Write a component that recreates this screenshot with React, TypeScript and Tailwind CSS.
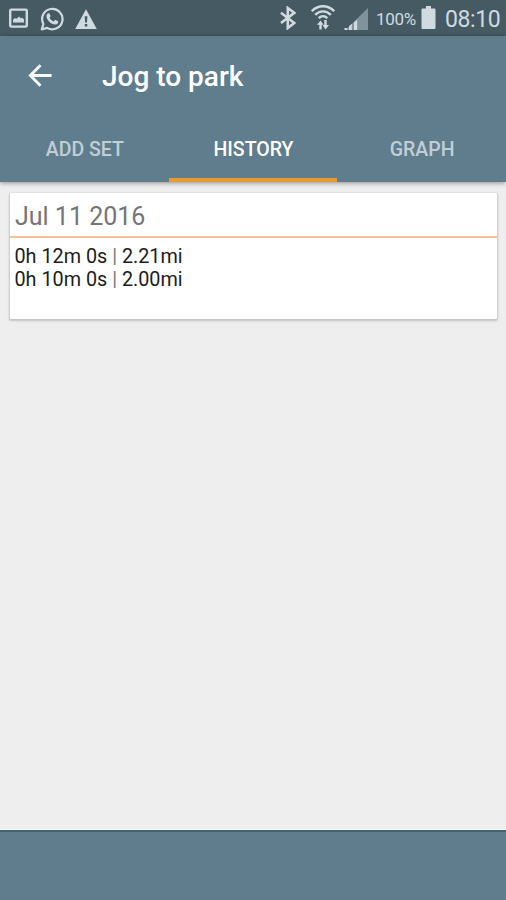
import React, { useState } from 'react';

interface SetEntry {
  id: number;
  duration: string;
  distance: string;
}

interface HistoryCardProps {
  date: string;
  sets: SetEntry[];
}

const TABS = ['ADD SET', 'HISTORY', 'GRAPH'];

const SETS: SetEntry[] = [
  { id: 1, duration: '0h 12m 0s', distance: '2.21mi' },
  { id: 2, duration: '0h 10m 0s', distance: '2.00mi' },
];

const StatusBar: React.FC = () => (
  <div className="flex h-9 shrink-0 items-start bg-[#465a64] text-[#cfdbe1]">
    <svg className="ml-[9px] mt-2 h-5 w-[19px]" viewBox="0 0 19 20" fill="none">
      <rect x="1.2" y="1.6" width="16.6" height="17" rx="1.2" stroke="currentColor" strokeWidth="2.4" />
      <path d="M4 14.5v-2.8l2-1.7 1.5.8 2.6-2.3 1.8 2 1.2-1 1.9 2v3z" fill="currentColor" />
    </svg>
    <svg className="ml-3 mt-[7px] h-6 w-6" viewBox="0 0 24 24" fill="none">
      <path
        d="M1.8 22.4l1.6-5.4A10.2 10.2 0 1 1 7.2 20.9z"
        stroke="currentColor"
        strokeWidth="2.2"
        strokeLinejoin="round"
      />
      <path
        d="M8.2 6.3c.5-.3 1.1-.2 1.4.4l.9 2c.2.4.1.7-.2 1l-.8 1c1 1.8 2.3 3 4.2 3.8l1-1.2c.3-.4.6-.4 1-.2l2 1c.5.2.6.6.5 1.1-.3 1.5-1.5 2.3-3 2.3-4 0-8.7-4.5-8.7-8.3 0-1.2.6-2.3 1.7-2.9z"
        fill="currentColor"
      />
    </svg>
    <svg className="ml-[11px] mt-[9px] h-5 w-[22px]" viewBox="0 0 22 20">
      <path d="M11 .3L21.8 20H.2z" fill="currentColor" />
      <path d="M9.7 7.3h2.7l-.4 6.2h-1.9zM9.8 15h2.5v2.4H9.8z" fill="#465a64" />
    </svg>
    <div className="grow" />
    <svg className="mt-[6px] h-6 w-4" viewBox="0 0 16 24" fill="none" stroke="currentColor" strokeWidth="2.6">
      <path d="M1 6.8L14.3 17l-6.500 5V2l6.500 4.8L1 17" />
    </svg>
    <svg className="ml-[15px] mt-[5px] h-[25px] w-6" viewBox="0 0 24 25" fill="none" stroke="currentColor" strokeWidth="2.4">
      <path d="M.8 6.2C7.2-.5 16.8-.5 23.2 6.2M4.2 9.8c4.5-4.6 11.1-4.6 15.6 0M7.7 13.1c2.5-2.5 6.1-2.5 8.6 0" />
      <path d="M9.5 24.5v-6M14.5 15v6" />
      <path d="M6 19.8l3.5-4.3 3 4.3zM11.5 20l3 4.5 3.5-4.5z" fill="currentColor" stroke="none" />
    </svg>
    <svg className="ml-[9px] mt-2 h-[22px] w-6" viewBox="0 0 24 22">
      <path d="M24 0v22H1.5z" fill="#80929b" />
      <path d="M.5 20h2.8v2H.5zM5 18.2l2.8-2.5V22H5zM10 14.5l3.2-3V22H10z" fill="currentColor" />
    </svg>
    <span className="ml-2 mt-2 w-[41px] whitespace-nowrap text-[17px] leading-[22px] tracking-[-0.3px]">100%</span>
    <svg className="ml-1 mt-[6px] h-[23px] w-[15px]" viewBox="0 0 15 23" fill="currentColor">
      <path d="M5 0h5v2.5h3.5q1 0 1 1V22q0 1-1 1h-12q-1 0-1-1V3.500q0-1 1-1H5z" />
    </svg>
    <span className="ml-[9px] mr-[5px] mt-[6px] w-[56px] whitespace-nowrap text-[23px] leading-[28px] tracking-[-0.4px]">08:10</span>
  </div>
);

const HistoryCard: React.FC<HistoryCardProps> = ({ date, sets }) => (
  <div className="ml-[10px] mr-[9px] h-[126px] rounded-[1px] bg-white shadow-[0_1px_2px_1px_rgba(0,0,0,0.18)]">
    <h2 className="h-[45px] border-b-2 border-[#f9bd98] pl-[5px] text-[25px] leading-[47px] text-[#757575]">{date}</h2>
    <ul className="pl-[4.5px] pt-[7px] text-[19.8px] leading-[23px] text-[#1c1c1c]">
      {sets.map((set) => (
        <li key={set.id} className="whitespace-nowrap">
          {set.duration} <span className="text-[#777]">|</span> {set.distance}
        </li>
      ))}
    </ul>
  </div>
);

const App: React.FC = () => {
  const [activeTab, setActiveTab] = useState('HISTORY');

  return (
    <div className="flex h-[900px] w-[506px] flex-col overflow-hidden bg-[#eeeeee] font-['Roboto',sans-serif]">
      <StatusBar />
      <header className="h-[146px] shrink-0 bg-[#607d8d] shadow-[0_1px_5px_rgba(0,0,0,0.4)]">
        <div className="flex h-20 items-center">
          <button className="ml-7 text-white" aria-label="Back">
            <svg className="block h-6 w-6" viewBox="0 0 24 24" fill="none" stroke="currentColor" strokeWidth="2.8">
              <path d="M23.5 11.500H2.5M12.5 1.3L2.3 11.5l10.2 10.2" />
            </svg>
          </button>
          <h1 className="ml-[50px] pt-0.5 text-[28px] font-medium text-white">Jog to park</h1>
        </div>
        <nav className="grid h-[66px] grid-cols-3">
          {TABS.map((tab) => (
            <button
              key={tab}
              onClick={() => setActiveTab(tab)}
              className={`border-b-4 pl-px pt-[5px] text-[19.5px] font-medium ${
                tab === activeTab ? 'border-[#e79a2e] text-white' : 'border-transparent text-[#c0cfd7]'
              }`}
            >
              {tab}
            </button>
          ))}
        </nav>
      </header>
      <main className="grow pt-[11px]">
        <HistoryCard date="Jul 11 2016" sets={SETS} />
      </main>
      <footer className="h-[70px] shrink-0 border-t-2 border-[#456470] bg-[#607d8d] shadow-[0_-1px_0_#fafafa]" />
    </div>
  );
};

export default App;
